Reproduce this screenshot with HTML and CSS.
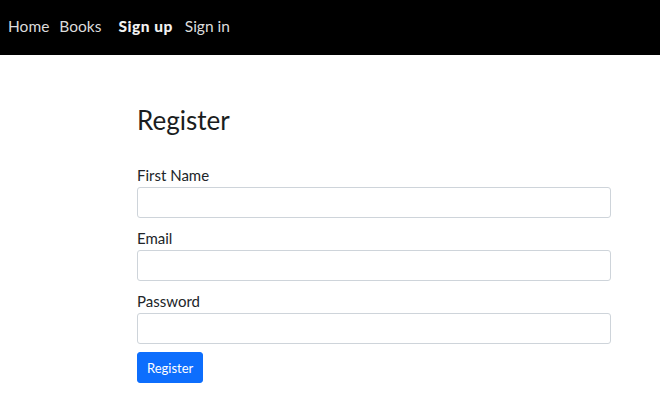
FILE: index.html
```html
<!DOCTYPE html>
<html>
<head>
<meta charset="utf-8">
<link rel="stylesheet" href="styles.css">
</head>
<body>
<nav class="topbar">
  <ul class="nav-list">
    <li><a class="nav-link" href="#">Home</a></li>
    <li><a class="nav-link" href="#">Books</a></li>
  </ul>
  <ul class="nav-list nav-list-auth">
    <li><a class="nav-link active" href="#">Sign up</a></li>
    <li><a class="nav-link" href="#">Sign in</a></li>
  </ul>
</nav>
<main class="container">
  <h4 class="title">Register</h4>
  <form class="form">
    <div class="group">
      <label class="label">First Name</label>
      <input class="input" type="text">
    </div>
    <div class="group">
      <label class="label">Email</label>
      <input class="input" type="text">
    </div>
    <div class="group">
      <label class="label">Password</label>
      <input class="input" type="password">
    </div>
    <button class="btn" type="button">Register</button>
  </form>
</main>
</body>
</html>
```
FILE: styles.css
```css
* { box-sizing: border-box; }
body {
  margin: 0;
  font-family: Lato, "Open Sans", sans-serif;
  font-size: 15px;
  line-height: 1.5;
  color: #212529;
  background: #fff;
}
.topbar {
  background: #000;
  height: 55px;
  display: flex;
  align-items: center;
  padding: 0 8px 2px;
  gap: 17px;
}
.nav-list {
  list-style: none;
  margin: 0;
  padding: 0;
  display: flex;
  gap: 10px;
}
.nav-list-auth {
  gap: 12px;
}
.nav-link {
  color: #dcdcdc;
  text-decoration: none;
  font-size: 15.5px;
}
.nav-link.active {
  color: #f2f2f2;
  font-weight: 900;
  letter-spacing: 0.5px;
}
.container {
  width: 474px;
  margin: 0 0 0 137px;
  padding-top: 50px;
}
.title {
  margin: 0 0 27px;
  font-size: 26px;
  font-weight: 400;
  line-height: 1.2;
  color: #1a1d20;
}
.group {
  display: flex;
  flex-direction: column;
  margin-bottom: 8px;
}
.label {
  font-size: 15px;
  line-height: 24px;
}
.input {
  height: 31px;
  border: 1px solid #ced4da;
  border-radius: 3px;
  padding: 4px 8px;
  font-size: 14px;
  font-family: inherit;
}
.btn {
  height: 31px;
  padding: 0 9px;
  background: #0d6efd;
  border: 1px solid #0d6efd;
  color: #fff;
  border-radius: 3px;
  font-family: inherit;
  font-size: 13px;
}
```
